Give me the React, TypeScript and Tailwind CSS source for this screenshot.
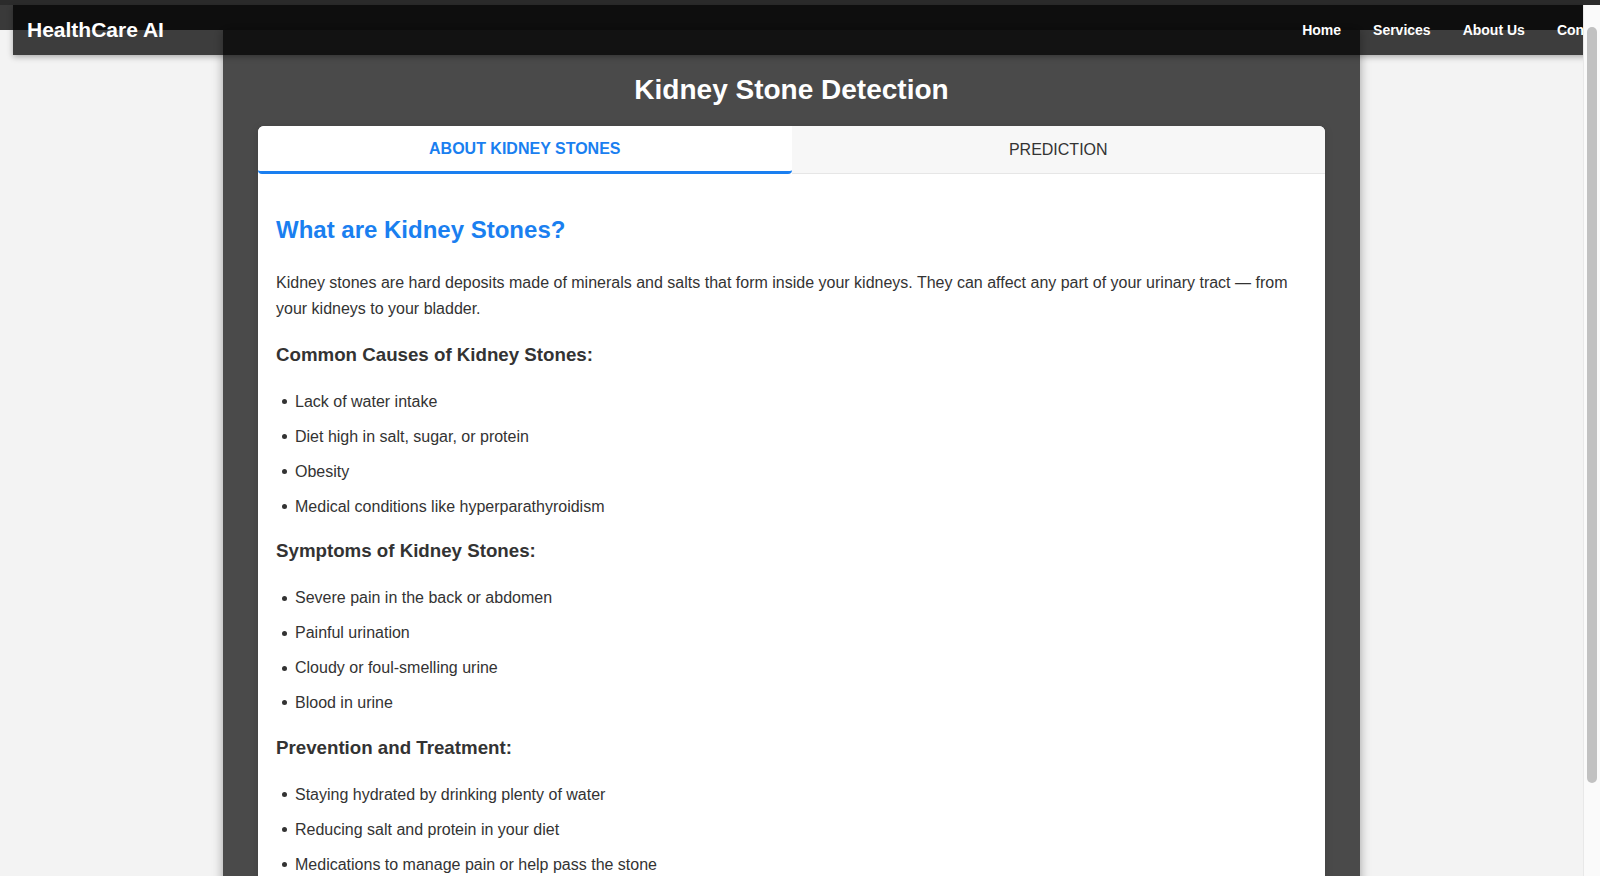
import React, { useState } from 'react';

const causes = [
  'Lack of water intake',
  'Diet high in salt, sugar, or protein',
  'Obesity',
  'Medical conditions like hyperparathyroidism',
];

const symptoms = [
  'Severe pain in the back or abdomen',
  'Painful urination',
  'Cloudy or foul-smelling urine',
  'Blood in urine',
];

const prevention = [
  'Staying hydrated by drinking plenty of water',
  'Reducing salt and protein in your diet',
  'Medications to manage pain or help pass the stone',
  'Surgical procedures for larger stones',
];

const Section = ({ title, items }: { title: string; items: string[] }) => (
  <>
    <h3 className="mt-[21px] mb-[23px] text-[18.72px] leading-[22px] font-bold text-[#333]">{title}</h3>
    <ul className="space-y-[9.3px] pl-[6px] text-[16px] leading-[25.6px] text-[#333]">
      {items.map((item) => (
        <li key={item} className="flex items-center">
          <span className="mr-[8px] h-[5px] w-[5px] shrink-0 rounded-full bg-[#333]" />
          {item}
        </li>
      ))}
    </ul>
  </>
);

export default function App() {
  const [tab, setTab] = useState<'about' | 'predict'>('about');

  const active = 'h-[48px] rounded-b-[4px] border-b-[3px] border-[#1a7ff0] bg-white text-[16px] font-bold text-[#1a7ff0]';
  const idle = 'h-[48px] border-b border-[#e6e6e6] bg-[#f7f7f7] pt-[1px] text-[16px] text-[#333]';

  return (
    <div className="flex h-[876px] w-[1600px] overflow-hidden bg-[#f3f3f3] font-['Liberation_Sans',Arial,sans-serif]">
      <div className="relative h-full flex-1 overflow-hidden">
        <div className="h-[5px] bg-[#2b2b2b]" />
        <div className="h-[25px] bg-[#3a3a3a]" />

        <main className="mx-auto min-h-[900px] w-[1137px] bg-[#4a4a4a] px-[35px] pt-[44px] shadow-[0_0_10px_rgba(0,0,0,0.35)]">
          <h1 className="mb-[20px] text-center text-[28px] leading-[32px] font-bold text-white">
            Kidney Stone Detection
          </h1>

          <div className="overflow-hidden rounded-t-[6px] bg-white shadow-[0_2px_8px_rgba(0,0,0,0.15)]">
            <div className="grid grid-cols-2">
              <button onClick={() => setTab('about')} className={tab === 'about' ? active : idle}>
                ABOUT KIDNEY STONES
              </button>
              <button onClick={() => setTab('predict')} className={tab === 'predict' ? active : idle}>
                PREDICTION
              </button>
            </div>

            <div className="px-[18px] pt-[42px] pb-10">
              <h2 className="mb-[26px] text-[24px] leading-[28px] font-bold text-[#1a7ff0]">
                What are Kidney Stones?
              </h2>
              <p className="pb-[2px] text-[16px] leading-[25.6px] text-[#333]">
                Kidney stones are hard deposits made of minerals and salts that form inside your kidneys. They can
                affect any part of your urinary tract — from your kidneys to your bladder.
              </p>
              <Section title="Common Causes of Kidney Stones:" items={causes} />
              <Section title="Symptoms of Kidney Stones:" items={symptoms} />
              <Section title="Prevention and Treatment:" items={prevention} />
            </div>
          </div>
        </main>

        <nav className="absolute top-[5px] left-[13px] flex h-[50px] w-[1611px] items-center justify-between bg-black/75 px-[14px] shadow-[0_2px_6px_rgba(0,0,0,0.3)]">
          <span className="text-[21px] font-bold text-white">HealthCare AI</span>
          <div className="flex gap-[32px] pr-[1px] text-[14px] font-bold text-white">
            <a>Home</a>
            <a>Services</a>
            <a>About Us</a>
            <a>Contact</a>
          </div>
        </nav>
      </div>

      <div className="flex h-full w-[17px] flex-col">
        <div className="h-[5px] bg-[#2b2b2b]" />
        <div className="flex-1 border-l border-[#e8e8e8] bg-[#fafafa] pt-[22px]">
          <div className="ml-[3px] h-[756px] w-[10px] rounded-full bg-[#c1c1c1]" />
        </div>
      </div>
    </div>
  );
}
